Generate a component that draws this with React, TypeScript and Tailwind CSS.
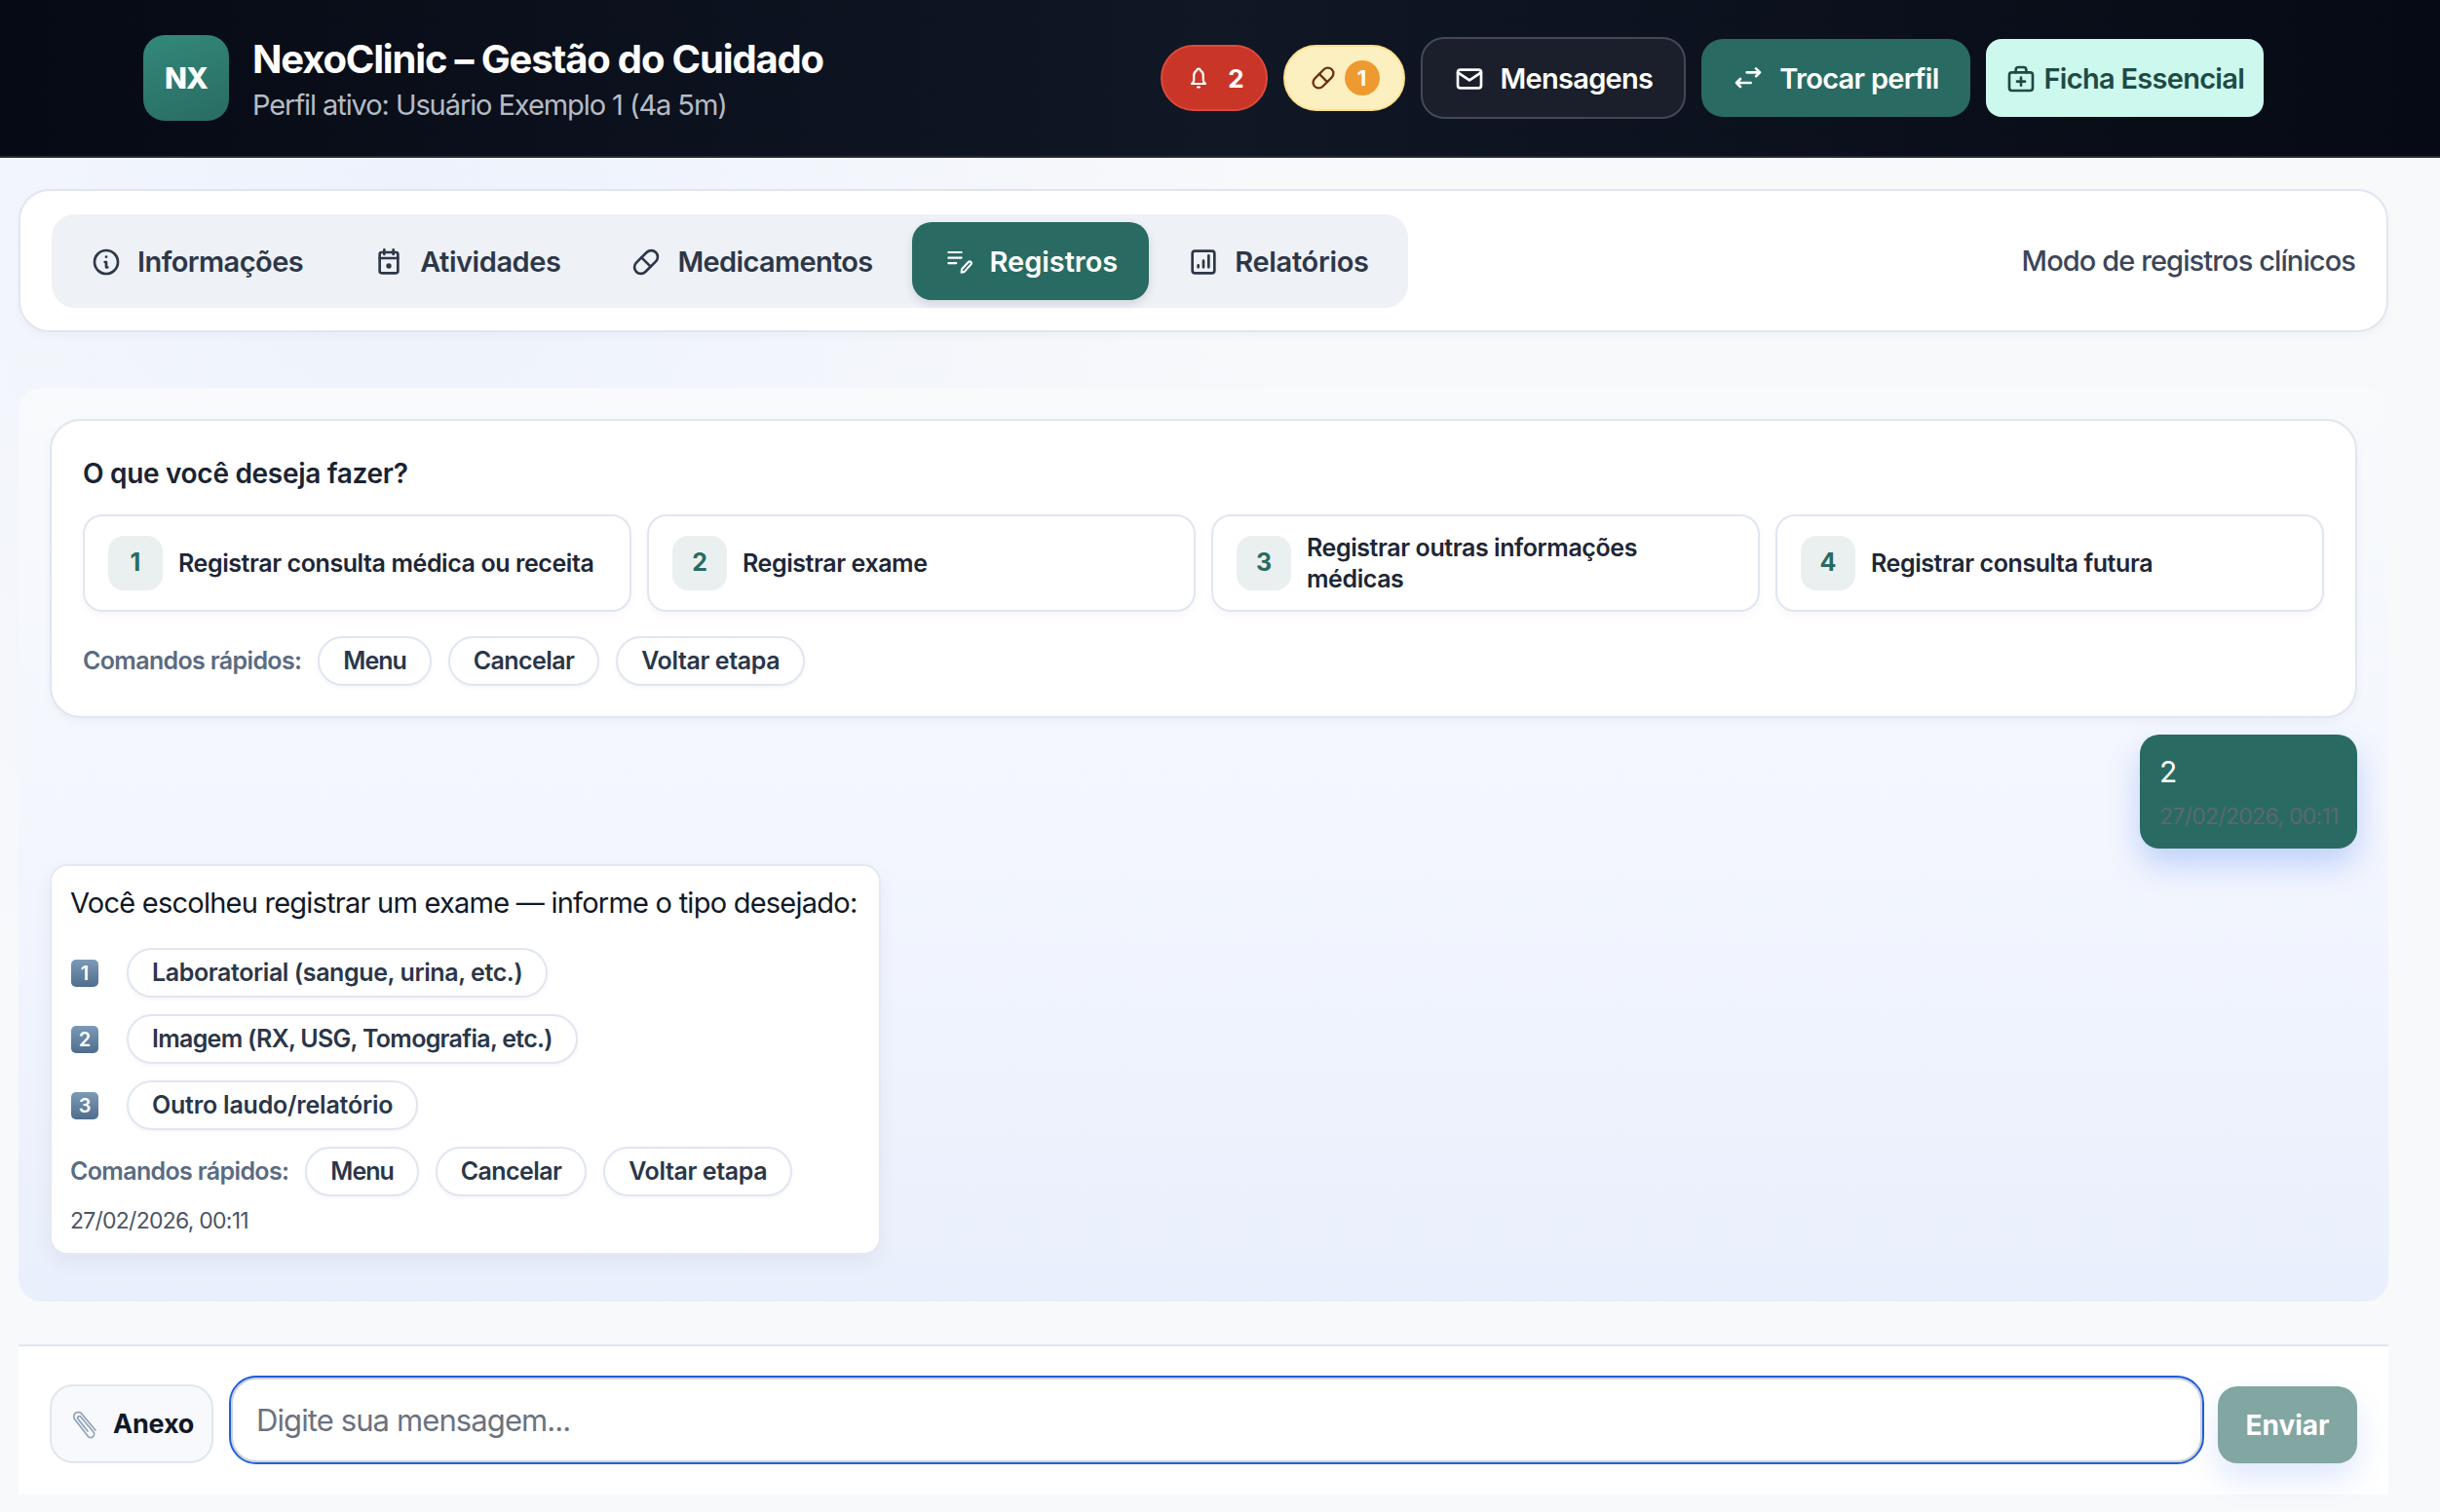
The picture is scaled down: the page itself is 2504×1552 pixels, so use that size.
import React from "react";

type IconProps = { className?: string; children: React.ReactNode };
function Ico({ className, children }: IconProps) {
  return (
    <svg viewBox="0 0 24 24" fill="none" stroke="currentColor" strokeWidth={2} strokeLinecap="round" strokeLinejoin="round" className={className}>
      {children}
    </svg>
  );
}

const PillPaths = () => (
  <>
    <path d="M4.5 12.5l8 -8a4.94 4.94 0 0 1 7 7l-8 8a4.94 4.94 0 0 1 -7 -7" />
    <path d="M8.5 8.5l7 7" />
  </>
);

function Pill({ children, track }: { children: React.ReactNode; track: string }) {
  return (
    <button className={`flex h-[51px] items-center whitespace-nowrap rounded-full border-2 border-[#e0e6f1] bg-white px-[24px] text-[25px] font-semibold text-[#2a3649] shadow-[0_2px_4px_rgba(15,23,42,0.04)] ${track}`}>
      {children}
    </button>
  );
}

function Quick({ gapClass }: { gapClass?: string }) {
  return (
    <div className={`flex items-center gap-[17px] ${gapClass ?? ""}`}>
      <span className="whitespace-nowrap text-[25px] font-semibold tracking-[-0.65px] text-[#5b6b83]">Comandos rápidos:</span>
      <Pill track="tracking-[-1px]">Menu</Pill>
      <Pill track="tracking-[-0.6px]">Cancelar</Pill>
      <Pill track="tracking-[-0.4px]">Voltar etapa</Pill>
    </div>
  );
}

function Keycap({ n }: { n: number }) {
  return (
    <span className="flex h-[28px] w-[28px] items-center justify-center rounded-[5px] bg-[linear-gradient(180deg,#7b9ab8,#4f6d8e)] text-[20px] font-semibold leading-none text-white">
      {n}
    </span>
  );
}

function Option({ n, label }: { n: number; label: string }) {
  return (
    <button className="flex h-[100px] items-center gap-[16px] rounded-[20px] border-2 border-[#e0e6f1] bg-white px-[24px] text-left shadow-[0_4px_8px_rgba(15,23,42,0.03)]">
      <span className="flex h-[56px] w-[56px] shrink-0 items-center justify-center rounded-[16px] bg-[#e9f0ef] text-[25px] font-bold text-[#296b62]">
        {n}
      </span>
      <span className="text-[25px] font-semibold leading-[32px] tracking-[-0.42px] text-[#1e2635]">{label}</span>
    </button>
  );
}

const tabs = [
  {
    label: "Informações",
    track: "tracking-[-0.55px]",
    icon: (
      <>
        <circle cx="12" cy="12" r="9" />
        <path d="M12 8h.01" />
        <path d="M11 12h1v4h1" />
      </>
    ),
  },
  {
    label: "Atividades",
    track: "tracking-[-0.45px]",
    icon: (
      <>
        <rect x="5" y="4.5" width="14" height="16" rx="1.5" />
        <path d="M8.5 2.5v3.5M15.5 2.5v3.5M5 9h14" />
        <circle cx="12" cy="15" r="1" fill="currentColor" />
      </>
    ),
  },
  { label: "Medicamentos", track: "tracking-[-0.65px]", icon: <PillPaths /> },
  {
    label: "Registros",
    track: "tracking-[-0.05px]",
    active: true,
    icon: (
      <>
        <path d="M4 4.5h10M4 8.7h10M4 12.8h6" strokeWidth={1.6} />
        <path d="M14 20l.3 -2.5l5 -5.5a1.3 1.3 0 0 1 2 1.8l-5 5.6z" strokeWidth={1.6} />
      </>
    ),
  },
  {
    label: "Relatórios",
    track: "tracking-[-0.3px]",
    icon: (
      <>
        <rect x="3.5" y="3.5" width="17" height="17" rx="2" />
        <path d="M8 16v-1.5M12 16v-5M16 16v-9" />
      </>
    ),
  },
];

const choices = [
  { label: "Laboratorial (sangue, urina, etc.)", track: "tracking-[-0.4px]" },
  { label: "Imagem (RX, USG, Tomografia, etc.)", track: "tracking-[-0.7px]" },
  { label: "Outro laudo/relatório", track: "tracking-[-0.2px]" },
];

export default function App() {
  return (
    <div className="flex min-h-[1552px] flex-col bg-[radial-gradient(circle_at_420px_210px,#edf2fc_0,#f8f9fb_900px)] [font-family:Inter,'Liberation_Sans',sans-serif]">
      <header className="flex h-[162px] items-center justify-between border-b-2 border-[#232838] bg-[linear-gradient(90deg,#060a14,#101725_50%,#060a14)] pl-[147px] pr-[181px]">
        <div className="flex items-center gap-[24px]">
          <div className="flex h-[88px] w-[88px] items-center justify-center rounded-[22px] bg-[linear-gradient(160deg,#33897b,#296b62)] text-[30px] font-extrabold tracking-[-1px] text-white">
            NX
          </div>
          <div className="flex flex-col pt-[3px]">
            <h1 className="text-[40px] font-bold leading-[50px] tracking-[-1.17px] text-white">NexoClinic – Gestão do Cuidado</h1>
            <p className="mt-[3px] text-[29px] font-normal leading-[38px] tracking-[-1.08px] text-[#b6bbc4]">Perfil ativo: Usuário Exemplo 1 (4a 5m)</p>
          </div>
        </div>
        <div className="flex items-center gap-[16px]">
          <div className="flex h-[68px] items-center gap-[20px] rounded-full border-2 border-[#dd4a3b] bg-[#c93628] pl-[27px] pr-[22px] text-[26px] font-bold text-white">
            <svg viewBox="0 0 20 24" fill="none" stroke="currentColor" strokeWidth={2.2} strokeLinecap="round" strokeLinejoin="round" className="h-[26px] w-[20px]">
              <path d="M10 2.5a1.8 1.8 0 0 1 1.8 1.8a6 6 0 0 1 3 5.2v5a5 5 0 0 0 2.2 3.5h-14a5 5 0 0 0 2.2 -3.5v-5a6 6 0 0 1 3 -5.2a1.8 1.8 0 0 1 1.8 -1.8" />
              <path d="M9 21.5h2" />
            </svg>
            <span>2</span>
          </div>
          <div className="flex h-[68px] items-center gap-[8px] rounded-full border-2 border-[#fde08a] bg-[#fdf0c0] pl-[25px] pr-[24px] text-[#6b3212]">
            <Ico className="h-[28px] w-[28px]">
              <PillPaths />
            </Ico>
            <span className="flex h-[36px] w-[36px] items-center justify-center rounded-full bg-[#ed9a30] text-[22px] font-bold text-white">1</span>
          </div>
          <button className="flex h-[84px] items-center gap-[16px] rounded-[24px] border-2 border-[#444955] bg-[#1a1f2b] px-[32px] pt-[1px] text-[29px] font-semibold tracking-[-0.72px] text-white">
            <Ico className="h-[32px] w-[32px]">
              <rect x="3" y="5" width="18" height="14" rx="2" />
              <path d="M3 7l9 6l9 -6" />
            </Ico>
            Mensagens
          </button>
          <button className="flex h-[80px] items-center gap-[16px] rounded-[22px] bg-[#296b62] px-[32px] pt-[1px] text-[29px] font-semibold tracking-[-0.72px] text-white">
            <Ico className="h-[32px] w-[32px]">
              <path d="M21 7h-10M18 4l3 3l-3 3" />
              <path d="M3 15h11M6 12l-3 3l3 3" />
            </Ico>
            Trocar perfil
          </button>
          <button className="flex h-[80px] items-center gap-[8px] rounded-[16px] bg-[#ccf8ee] pl-[20px] pr-[20px] pt-[1px] text-[29px] font-semibold tracking-[-0.72px] text-[#1f4a45]">
            <Ico className="h-[32px] w-[32px]">
              <rect x="3" y="7" width="18" height="14" rx="2" />
              <path d="M8 7v-2a2 2 0 0 1 2 -2h4a2 2 0 0 1 2 2v2" />
              <path d="M12 11v6M9 14h6" />
            </Ico>
            Ficha Essencial
          </button>
        </div>
      </header>

      <main className="flex flex-1 flex-col pl-[19px] pr-[20px] pb-[18px] pt-[32px]">
        <nav className="flex h-[147px] w-[2432px] items-center justify-between rounded-[32px] border-2 border-[#e0e6f1] bg-white pl-[32px] pr-[32px] pt-[1px] shadow-[0_4px_10px_rgba(15,23,42,0.03)]">
          <div className="flex h-[96px] items-center gap-[8px] rounded-[24px] bg-[#eef1f6] p-[8px]">
            {tabs.map((t) => (
              <button
                key={t.label}
                className={
                  t.active
                    ? `flex h-[80px] items-center gap-[16px] rounded-[20px] bg-[#296b62] px-[32px] pt-[1px] text-[29px] font-semibold text-white shadow-[0_4px_10px_rgba(15,23,42,0.12)] ${t.track}`
                    : `flex h-[80px] items-center gap-[16px] rounded-[20px] px-[32px] pt-[1px] text-[29px] font-semibold text-[#2d3748] ${t.track}`
                }
              >
                <Ico className="h-[32px] w-[32px]">{t.icon}</Ico>
                {t.label}
              </button>
            ))}
          </div>
          <span className="text-[29px] font-medium tracking-[-0.9px] text-[#3b4658]">Modo de registros clínicos</span>
        </nav>

        <section className="mt-[57px] flex h-[938px] w-[2432px] flex-col items-start rounded-[24px] bg-[linear-gradient(180deg,#f8fafc,#f3f6fe_50%,#e9effc)] px-[32px] pt-[32px]">
          <div className="flex h-[307px] w-full flex-col rounded-[32px] border-2 border-[#e0e6f1] bg-white px-[32px] pt-[32px] shadow-[0_4px_10px_rgba(15,23,42,0.04)]">
            <h2 className="text-[28px] font-semibold leading-[44px] tracking-[-0.3px] text-[#1a2333]">O que você deseja fazer?</h2>
            <div className="mt-[20px] grid grid-cols-4 gap-[16px]">
              <Option n={1} label="Registrar consulta médica ou receita" />
              <Option n={2} label="Registrar exame" />
              <Option n={3} label="Registrar outras informações médicas" />
              <Option n={4} label="Registrar consulta futura" />
            </div>
            <Quick gapClass="mt-[25px]" />
          </div>

          <div className="mt-[17px] flex h-[117px] w-[223px] flex-col self-end rounded-[20px] bg-[#296b62] px-[20px] pt-[16px] shadow-[0_16px_32px_rgba(37,99,235,0.25)]">
            <span className="text-[30px] leading-[44px] text-white">2</span>
            <span className="mt-[6px] whitespace-nowrap text-[23px] leading-[36px] tracking-[-0.7px] text-[#5d6770]">27/02/2026, 00:11</span>
          </div>

          <div className="mt-[16px] flex h-[401px] w-[853px] flex-col rounded-[18px] border-2 border-[#e4e9f4] bg-white pl-[19px] pr-[12px] pt-[14px] shadow-[0_8px_20px_rgba(15,23,42,0.05)]">
            <p className="whitespace-nowrap text-[29px] leading-[48px] tracking-[-0.76px] text-[#111827]">Você escolheu registrar um exame — informe o tipo desejado:</p>
            <div className="mt-[22px] flex flex-col gap-[17px]">
              {choices.map((o, i) => (
                <div key={o.label} className="flex items-center gap-[29px] pl-[1px]">
                  <Keycap n={i + 1} />
                  <Pill track={o.track}>{o.label}</Pill>
                </div>
              ))}
              <Quick />
            </div>
            <span className="mt-[7px] whitespace-nowrap text-[23px] leading-[36px] tracking-[-0.75px] text-[#4b5563]">27/02/2026, 00:11</span>
          </div>
        </section>

        <footer className="mt-[44px] flex h-[154px] w-[2432px] items-start gap-[16px] border-t-2 border-[#e0e6f1] bg-white pl-[32px] pr-[32px] pt-[32px]">
          <button className="mt-[7px] flex h-[81px] w-[168px] shrink-0 items-center gap-[15px] rounded-[24px] border-2 border-[#e0e6f1] bg-[#f7f9fc] pl-[20px] pt-[2px] text-[27px] font-bold tracking-[-0.2px] text-[#111827]">
            <svg viewBox="0 0 28 30" fill="none" stroke="#8ea2b8" strokeWidth={1.7} strokeLinecap="round" strokeLinejoin="round" className="h-[30px] w-[28px] shrink-0">
              <path d="M25 20L11 3.5a4.5 4.5 0 0 0 -7.5 5L17 26a3.6 3.6 0 0 0 6 -4L10 6.5a1.8 1.8 0 0 0 -3 2L17 21" />
            </svg>
            Anexo
          </button>
          <input
            placeholder="Digite sua mensagem..."
            className="ml-[2px] h-[87px] min-w-0 flex-1 rounded-[26px] border-2 border-[#cfd2d8] bg-white px-[24px] text-[31px] tracking-[-0.9px] outline-2 outline-[#1f5fdf] placeholder:text-[#6b7280]"
          />
          <button className="mt-[9px] h-[79px] w-[143px] shrink-0 rounded-[20px] bg-[#82a6a2] text-[28px] font-bold text-white shadow-[0_16px_32px_rgba(37,99,235,0.15)]">
            Enviar
          </button>
        </footer>
      </main>
    </div>
  );
}
